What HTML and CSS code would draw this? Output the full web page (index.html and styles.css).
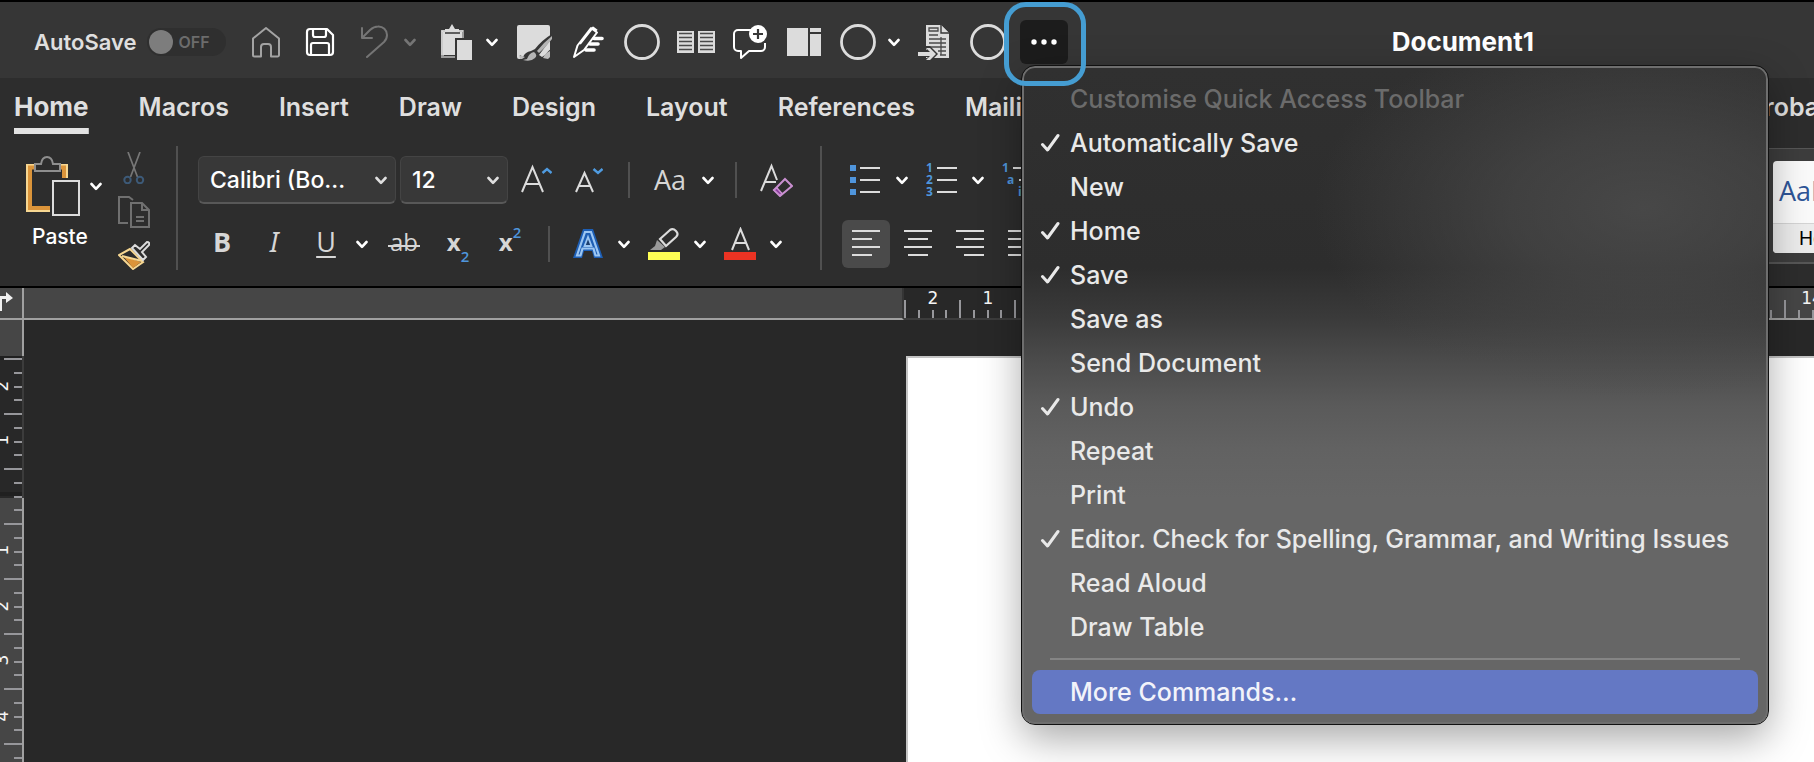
FILE: index.html
```html
<!DOCTYPE html>
<html lang="en-GB">
<head>
<meta charset="utf-8">
<title>Document1</title>
<link rel="stylesheet" href="styles.css">
</head>
<body>
<svg class="defs" aria-hidden="true">
  <symbol id="chev" viewBox="0 0 12 9"><path d="M1.5 2 6 6.8 10.500 2" fill="none" stroke="currentColor" stroke-width="2.600" stroke-linecap="round" stroke-linejoin="round"/></symbol>
  <symbol id="check" viewBox="0 0 20 20"><path d="M2.500 11.500 7.500 17 18 2.500" fill="none" stroke="currentColor" stroke-width="3" stroke-linecap="round" stroke-linejoin="round"/></symbol>
  <symbol id="ring" viewBox="0 0 36 36"><circle cx="18" cy="18" r="16.500" fill="none" stroke="#dcdcdc" stroke-width="2.800"/></symbol>
</svg>
<div class="app">
  <header class="titlebar">
    <div class="autosave">
      <label for="autosave">AutoSave</label>
      <span class="toggle"><input id="autosave" type="checkbox" role="switch"><span class="off">OFF</span></span>
    </div>
    <nav class="quick" aria-label="Quick Access Toolbar">
      <button class="tool" aria-label="Home"><svg width="30" height="32" viewBox="0 0 30 32" fill="none" stroke="#a3a3a3" stroke-width="2" stroke-linejoin="round"><path d="M2 12.500 15 2 28 12.500V29a1.500 1.500 0 0 1-1.500 1.500H20V21q0-3-3-3h-4q-3 0-3 3v9.500H3.500A1.500 1.500 0 0 1 2 29Z"/></svg></button>
      <button class="tool" aria-label="Save"><svg width="30" height="30" viewBox="0 0 30 30" fill="none" stroke="#fff" stroke-width="2.200" stroke-linejoin="round"><path d="M5 2h17l6 6v17a3 3 0 0 1-3 3H5a3 3 0 0 1-3-3V5a3 3 0 0 1 3-3Z"/><path d="M8 2v6q0 2 2 2h9q2 0 2-2V2M6 28V18q0-2 2-2h14q2 0 2 2v10"/></svg></button>
      <button class="tool" aria-label="Undo"><svg width="28" height="34" viewBox="0 0 28 34" fill="none" stroke="#757575" stroke-width="2" stroke-linecap="round" stroke-linejoin="round"><path d="M2 3v10h10M2.500 12.500 10 5Q14 1.500 18 1.500A8.500 8.500 0 0 1 27 10q0 4-3 7L7 32"/></svg></button>
      <button class="drop drop-wide dim" aria-label="Undo options"><svg width="12" height="9"><use href="#chev"/></svg></button>
      <button class="tool" aria-label="Paste"><svg width="32" height="36" viewBox="0 0 32 36"><path d="M1 6h23v9h-3V9H4v23h11v2H1Z" fill="#9a9a9a"/><path d="M3 8h19v6h-7v17H3Z" fill="#dcdcdc"/><path d="M2 31V7h21" fill="none" stroke="#dcdcdc" stroke-width="1.500"/><path d="M5 8V5h4l3-5 3 5h4v3Z" fill="#dcdcdc"/><path d="M5 9h15" stroke="#363636" stroke-width="1.500"/><path d="M15 14h18v22H15Z" fill="#363636"/><path d="M17 16h15v20H17Z" fill="#dcdcdc"/></svg></button>
      <button class="drop drop-mid" aria-label="Paste options"><svg width="12" height="9"><use href="#chev"/></svg></button>
      <button class="tool" aria-label="Format painter"><svg width="36" height="38" viewBox="0 0 36 38"><rect x="1" y="2" width="33" height="34" rx="2" fill="#dcdcdc"/><path d="M36 11Q26 17 19 26l-4 2q-6 1-8 6l-3-2v6h32V25q-4 3-7 7l-3 2-3-2Q29 24 36 15Z" fill="#363636"/><path d="M36 13Q27 20 21 28l2 2Q30 24 36 16ZM18 29q-5 1-7 7l-4 1q8 2 12-2 3-3-1-6Z" fill="#b4b4b4"/><path d="M27 35q2-5 7-7v6l-2 2ZM3 32l6 2-3 2H4Z" fill="#bcbcbc"/></svg></button>
      <button class="tool" aria-label="Editor"><svg width="32" height="34" viewBox="0 0 32 34" fill="none" stroke="#fff" stroke-width="2" stroke-linejoin="round"><path d="M2 32 5.500 20.500 19 3l6 4.500L12 25 2 32ZM8 19 21 2.500l4 3"/><g stroke-width="3.600" stroke-linecap="round"><path d="M22 13.500h8M18 19h8M14 25h8" /></g></svg></button>
      <button class="tool" aria-label="Command"><svg width="36" height="36"><use href="#ring"/></svg></button>
      <button class="tool" aria-label="Read mode"><svg width="38" height="24" viewBox="0 0 38 24"><path d="M0 1h17v22H0ZM21 1h17v22H21Z" fill="#dcdcdc"/><path d="M2 3.500h13M2 7.500h13M2 11.500h13M2 15.500h13M2 19.500h13M23 3.500h13M23 7.500h13M23 11.500h13M23 15.500h13M23 19.500h13" stroke="#4a4a4a" stroke-width="1.300"/></svg></button>
      <button class="tool" aria-label="New comment"><svg width="36" height="38" viewBox="0 0 36 38"><path d="M19 7H6a4 4 0 0 0-4 4v13a4 4 0 0 0 4 4h3v7l8-7h12a4 4 0 0 0 4-4v-4" fill="none" stroke="#fff" stroke-width="2" stroke-linejoin="round"/><circle cx="26" cy="11" r="9" fill="#fff"/><path d="M26 6v10M21 11h10" stroke="#363636" stroke-width="2.200"/></svg></button>
      <button class="tool" aria-label="Side pane"><svg width="34" height="30" viewBox="0 0 34 30" fill="#dcdcdc"><path d="M0 1h21v28H0ZM23 1h11v4H23ZM23 7h11v22H23Z"/></svg></button>
      <button class="tool" aria-label="Command"><svg width="36" height="36"><use href="#ring"/></svg></button>
      <button class="drop" aria-label="Command options"><svg width="12" height="9"><use href="#chev"/></svg></button>
      <button class="tool" aria-label="Insert from file"><svg width="32" height="38" viewBox="0 0 32 38"><path d="M8 2h15l8 8v25H8Z" fill="#dcdcdc"/><path d="M23 2v8h8" fill="#dcdcdc" stroke="#363636" stroke-width="1.400"/><path d="M11 5h9v3h-9ZM11 12h9M11 16h17M11 20h17M11 24h17M20 28h8M22 32h6M23 14v18" fill="none" stroke="#4a4a4a" stroke-width="1.300"/><path d="M0 27h9l-3-4h6l8 8-7 7H6l4-4H0Z" fill="#363636"/><path d="M0 29h12l-4-4h4l6 6-6 6H8l4-4H0Z" fill="#dcdcdc"/></svg></button>
      <button class="tool" aria-label="Command"><svg width="36" height="36"><use href="#ring"/></svg></button>
      <div class="more-wrap">
        <button class="more" aria-label="Customise Quick Access Toolbar" aria-expanded="true"><svg width="26" height="6" fill="#fff"><circle cx="3" cy="3" r="2.700"/><circle cx="13" cy="3" r="2.700"/><circle cx="23" cy="3" r="2.700"/></svg></button>
        <span class="focus-ring"></span>
        <div class="menu" role="menu">
          <div class="menu-title">Customise Quick Access Toolbar</div>
          <button class="item" role="menuitemcheckbox" aria-checked="true"><svg width="20" height="20"><use href="#check"/></svg>Automatically Save</button>
          <button class="item" role="menuitemcheckbox">New</button>
          <button class="item" role="menuitemcheckbox" aria-checked="true"><svg width="20" height="20"><use href="#check"/></svg>Home</button>
          <button class="item" role="menuitemcheckbox" aria-checked="true"><svg width="20" height="20"><use href="#check"/></svg>Save</button>
          <button class="item" role="menuitemcheckbox">Save as</button>
          <button class="item" role="menuitemcheckbox">Send Document</button>
          <button class="item" role="menuitemcheckbox" aria-checked="true"><svg width="20" height="20"><use href="#check"/></svg>Undo</button>
          <button class="item" role="menuitemcheckbox">Repeat</button>
          <button class="item" role="menuitemcheckbox">Print</button>
          <button class="item" role="menuitemcheckbox" aria-checked="true"><svg width="20" height="20"><use href="#check"/></svg>Editor. Check for Spelling, Grammar, and Writing Issues</button>
          <button class="item" role="menuitemcheckbox">Read Aloud</button>
          <button class="item" role="menuitemcheckbox">Draw Table</button>
          <hr>
          <button class="item selected" role="menuitem">More Commands…</button>
        </div>
      </div>
    </nav>
    <h1>Document1</h1>
  </header>

  <nav class="tabs" aria-label="Ribbon">
    <button class="tab active">Home</button>
    <button class="tab">Macros</button>
    <button class="tab">Insert</button>
    <button class="tab">Draw</button>
    <button class="tab">Design</button>
    <button class="tab">Layout</button>
    <button class="tab">References</button>
    <button class="tab">Mailings</button>
    <button class="tab last">Acrobat</button>
  </nav>

  <section class="ribbon">
    <div class="group clipboard">
      <div class="paste">
        <div class="paste-row">
          <button class="plain" aria-label="Paste"><svg width="54" height="60" viewBox="0 0 54 60" fill="none"><path d="M41 22V9H1v46h24" stroke="#f7d791" stroke-width="2"/><path d="M38 22V11.500H4V52h20" stroke="#db943a" stroke-width="4"/><path d="M9 8h6Q16 1 21 1t6 7h7v7H9Z" fill="#2d2d2d" stroke="#8e8e8e" stroke-width="2"/><path d="M24 22h31v38H24Z" fill="#2d2d2d"/><path d="M27 25h26v34H27Z" stroke="#dcdcdc" stroke-width="2"/></svg></button>
          <button class="plain" aria-label="Paste options"><svg width="12" height="9"><use href="#chev"/></svg></button>
        </div>
        <span class="paste-label">Paste</span>
      </div>
      <div class="clip-tools">
        <button class="plain" aria-label="Cut"><svg width="22" height="32" viewBox="0 0 22 32" fill="none"><path d="M5 0 14.500 25M17 0 7.500 25" stroke="#777" stroke-width="1.700"/><circle cx="4.500" cy="28" r="3.200" stroke="#3d5a78" stroke-width="2"/><circle cx="17" cy="28" r="3.200" stroke="#3d5a78" stroke-width="2"/></svg></button>
        <button class="plain" aria-label="Copy"><svg width="32" height="32" viewBox="0 0 32 32" fill="none" stroke="#707070" stroke-width="2"><path d="M10 27H1V1h10l4 3M13 7h11l7 7v17H13ZM24 7v7h7M18 21h8M18 25h8"/></svg></button>
        <button class="plain" aria-label="Format painter"><svg width="32" height="30" viewBox="0 0 32 30" fill="none" stroke-width="2"><path d="M12 9 1 15q7 7 14 14l10-7Z" fill="#2d2d2d" stroke="#f7d791"/><path d="m5 16 18 6-8 6Z" fill="#db943a"/><path d="m4 16 20 5" stroke="#f7d791"/><path d="m14 8 3-3 5 4 7-7q3 0 2 3l-7 7 4 5-3 3Z" fill="#2d2d2d" stroke="#dcdcdc"/></svg></button>
      </div>
    </div>

    <div class="group font">
      <div class="row row-spaced">
        <div class="combo combo-font"><select aria-label="Font"><option>Calibri (Bo…</option></select><svg width="12" height="9"><use href="#chev"/></svg></div>
        <div class="combo combo-size"><select aria-label="Font size"><option>12</option></select><svg width="12" height="9"><use href="#chev"/></svg></div>
        <button class="cmd" aria-label="Increase font size"><svg width="32" height="32" viewBox="0 0 32 32" fill="none"><path d="M2 28 12.500 3 23 28M6 20h13" stroke="#dcdcdc" stroke-width="2"/><path d="m22.500 9 4.500-4 4.500 4" stroke="#4f9be0" stroke-width="2.400"/></svg></button>
        <button class="cmd" aria-label="Decrease font size"><svg width="28" height="32" viewBox="0 0 28 32" fill="none"><path d="M1 28 9.500 9 18 28M4 22h11" stroke="#dcdcdc" stroke-width="2"/><path d="m18.500 5 4.500 4 4.500-4" stroke="#4f9be0" stroke-width="2.400"/></svg></button>
        <span class="rule"></span>
        <button class="cmd glyph case" aria-label="Change case">Aa</button>
        <button class="drop" aria-label="Case options"><svg width="12" height="9"><use href="#chev"/></svg></button>
        <span class="rule"></span>
        <button class="cmd" aria-label="Clear formatting"><svg width="34" height="34" viewBox="0 0 34 34" fill="none"><path d="M2 28 12.500 3 18 17M6 19h11" stroke="#dcdcdc" stroke-width="2"/><path d="M26 16 33 23 21 33 15 27Z" fill="#2d2d2d" stroke="#c98fd0" stroke-width="2"/><path d="m18 25 5 5.500-2 2-6-5.500Z" fill="#8e3fa0" stroke="#c98fd0" stroke-width="1.500"/></svg></button>
      </div>
      <div class="row">
        <button class="cmd glyph bold" aria-label="Bold">B</button>
        <button class="cmd glyph italic" aria-label="Italic">I</button>
        <button class="cmd glyph underline" aria-label="Underline">U</button>
        <button class="drop" aria-label="Underline options"><svg width="12" height="9"><use href="#chev"/></svg></button>
        <button class="cmd glyph strike" aria-label="Strikethrough">ab</button>
        <button class="cmd glyph script" aria-label="Subscript">x<sub>2</sub></button>
        <button class="cmd glyph script" aria-label="Superscript">x<sup>2</sup></button>
        <span class="rule"></span>
        <button class="cmd" aria-label="Text effects"><svg width="32" height="32" viewBox="0 0 32 32" stroke-linejoin="miter"><path d="M11 1h10l10 29h-9l-2-7h-8l-2 7H1Z" fill="#1d5eb4"/><path d="M13 4h6l8 23.500h-3.500l-2-7h-11l-2 7H5Z" fill="none" stroke="#9cc6f2" stroke-width="2.200"/><path d="M16 9 12.500 18h7Z" fill="#1d3f6e" stroke="#9cc6f2" stroke-width="1.800"/></svg></button>
        <button class="drop" aria-label="Text effect options"><svg width="12" height="9"><use href="#chev"/></svg></button>
        <button class="cmd" aria-label="Highlight"><svg width="32" height="34" viewBox="0 0 32 34"><path d="M0 25h32v8H0Z" fill="#ffff54"/><path d="m12 12 10-9q3-2 6 1t0 6L18 19Z" fill="none" stroke="#dcdcdc" stroke-width="2.200"/><path d="m9 13 8 7-4 3H2l5-4Z" fill="#9a9a9a"/></svg></button>
        <button class="drop" aria-label="Highlight options"><svg width="12" height="9"><use href="#chev"/></svg></button>
        <button class="cmd" aria-label="Font colour"><svg width="32" height="34" viewBox="0 0 32 34"><path d="M0 25h32v8H0Z" fill="#ea3323"/><path d="M8 23 16.500 2 25 23M11 16h11" fill="none" stroke="#dcdcdc" stroke-width="2"/></svg></button>
        <button class="drop" aria-label="Colour options"><svg width="12" height="9"><use href="#chev"/></svg></button>
      </div>
    </div>

    <div class="group paragraph">
      <div class="row">
        <button class="cmd" aria-label="Bullets"><svg width="32" height="32" viewBox="0 0 32 32"><path d="M0 1h6v6H0ZM0 13h6v6H0ZM0 25h6v6H0Z" fill="#4f95dc"/><path d="M10 4h20M10 16h20M10 28h20" stroke="#dcdcdc" stroke-width="2"/></svg></button>
        <button class="drop" aria-label="Bullet options"><svg width="12" height="9"><use href="#chev"/></svg></button>
        <button class="cmd" aria-label="Numbering"><svg class="digits" width="32" height="34" viewBox="0 0 32 34"><text x="0" y="9">1</text><text x="0" y="21">2</text><text x="0" y="33">3</text><path d="M11 5h20M11 17h20M11 29h20" stroke="#dcdcdc" stroke-width="2"/></svg></button>
        <button class="drop" aria-label="Numbering options"><svg width="12" height="9"><use href="#chev"/></svg></button>
        <button class="cmd" aria-label="Multilevel list"><svg class="digits" width="32" height="34" viewBox="0 0 32 34"><text x="0" y="9">1</text><text x="5" y="21">a</text><text x="16" y="33">i</text><path d="M11 5h20M17 17h14M22 29h9" stroke="#dcdcdc" stroke-width="2"/></svg></button>
      </div>
      <div class="row">
        <button class="cmd align on" aria-label="Align left"><svg width="28" height="28" stroke="#dcdcdc" stroke-width="2"><path d="M0 1h28M0 9h20M0 17h28M0 25h20"/></svg></button>
        <button class="cmd align" aria-label="Centre"><svg width="28" height="28" stroke="#dcdcdc" stroke-width="2"><path d="M0 1h28M4 9h20M0 17h28M4 25h20"/></svg></button>
        <button class="cmd align" aria-label="Align right"><svg width="28" height="28" stroke="#dcdcdc" stroke-width="2"><path d="M0 1h28M8 9h20M0 17h28M8 25h20"/></svg></button>
        <button class="cmd align" aria-label="Justify"><svg width="28" height="28" stroke="#dcdcdc" stroke-width="2"><path d="M0 1h28M0 9h28M0 17h28M0 25h28"/></svg></button>
      </div>
    </div>

    <div class="gallery">
      <button class="style-card"><span class="sample">AaBbCc</span><span class="style-name">Heading 1</span></button>
    </div>
  </section>

  <main class="work">
    <div class="corner"><svg width="14" height="24" viewBox="0 0 14 24"><path d="M0 5h6V1l7 6-7 5V8H2v12H0Z" fill="#f0f0f0"/></svg></div>
    <div class="hruler">
      <div class="outside"></div>
      <svg class="scale" height="32" width="100%">
        <defs><pattern id="hticks" x="-1" width="55" height="30" patternUnits="userSpaceOnUse"><path d="M2 12v18M16 22v8M30 22v8M43 22v8" stroke="#97979b" stroke-width="2"/></pattern></defs>
        <rect width="100%" height="30" fill="#282828"/>
        <rect x="138" width="100%" height="30" fill="#464646"/>
        <rect width="100%" height="30" fill="url(#hticks)"/>
        <rect y="30" width="100%" height="2" fill="#3c3c3c"/>
        <rect x="138" y="30" width="100%" height="2" fill="#a0a0a0"/>
        <text x="29" y="16">2</text><text x="84" y="16">1</text><text x="908" y="16">14</text>
      </svg>
    </div>
    <svg class="vruler" width="24" height="100%">
      <defs><pattern id="vticks" y="37" width="24" height="55" patternUnits="userSpaceOnUse"><path d="M4 2h18M14 16h8M14 30h8M14 43h8" stroke="#97979b" stroke-width="2"/></pattern></defs>
      <rect width="24" height="100%" fill="#464646"/>
      <rect x="22" width="2" height="100%" fill="#a0a0a0"/>
      <rect y="36" width="24" height="142" fill="#282828"/>
      <rect y="36" width="22" height="4" fill="#202020"/><rect y="172" width="22" height="4" fill="#202020"/>
      <rect x="22" y="36" width="2" height="142" fill="#3c3c3c"/>
      <rect y="37" width="24" height="100%" fill="url(#vticks)"/>
      <g class="vnums">
        <text transform="translate(8 66) rotate(-90)">2</text><text transform="translate(8 120) rotate(-90)">1</text>
        <text transform="translate(8 230) rotate(-90)">1</text><text transform="translate(8 286) rotate(-90)">2</text>
        <text transform="translate(8 340) rotate(-90)">3</text><text transform="translate(8 396) rotate(-90)">4</text>
      </g>
    </svg>
    <div class="canvas"><article class="page"></article></div>
  </main>
</div>
</body>
</html>
```
FILE: styles.css
```css
:root {
  --page-left: 880px;
  --bar: #363636;
  --ribbon: #2d2d2d;
  --ink: #dfdfdf;
}
* { box-sizing: border-box; }
body {
  margin: 0;
  background: #282828;
  color: var(--ink);
  font-family: Inter, "Liberation Sans", sans-serif;
}
.defs { display: none; }
button {
  margin: 0;
  padding: 0;
  border: 0;
  background: none;
  color: inherit;
  font: inherit;
}
svg { display: block; overflow: hidden; }
.app {
  display: flex;
  flex-direction: column;
  height: 100vh;
  overflow: hidden;
}

/* Title bar */
.titlebar {
  display: flex;
  align-items: center;
  height: 78px;
  flex: none;
  padding: 4px 280px 0 34px;
  border-top: 2px solid #000;
  background: var(--bar);
}
.autosave {
  display: flex;
  align-items: center;
  gap: 10px;
  width: 205px;
  font-size: 22px;
  font-weight: 600;
  line-height: 28px;
}
.toggle {
  display: flex;
  align-items: center;
  gap: 6px;
  width: 79px;
  height: 28px;
  padding: 2px;
  border-radius: 14px;
  background: #2f2f2f;
}
.toggle input {
  appearance: none;
  width: 24px;
  height: 24px;
  margin: 0;
  border-radius: 50%;
  background: #7d7d7d;
}
.off { color: #6c6c6c; font-size: 16px; }
.quick { display: flex; align-items: center; color: #fff; }
.tool, .drop, .cmd {
  display: flex;
  align-items: center;
  justify-content: center;
  flex: none;
}
.tool { width: 54px; height: 44px; }
.drop {
  justify-content: flex-start;
  width: 22px;
  height: 44px;
  padding-left: 3px;
  color: #fff;
}
.drop-mid { width: 24px; }
.drop-wide { width: 28px; }
.dim { color: #757575; }
.more-wrap { position: relative; margin-left: 5px; }
.more {
  display: flex;
  align-items: center;
  justify-content: center;
  width: 48px;
  height: 44px;
  border-radius: 6px;
  background: #1c1c1c;
}
.focus-ring {
  position: absolute;
  z-index: 3;
  inset: -18px -18px -22px -16px;
  border: 5px solid #459dd2;
  border-radius: 22px;
}
h1 {
  margin: 0 0 0 auto;
  color: #fff;
  font-size: 26px;
  font-weight: 700;
  line-height: 32px;
}

/* Quick access menu */
.menu {
  position: absolute;
  z-index: 2;
  top: 46px;
  left: 2px;
  width: 746px;
  padding: 9px 8px 8px;
  border: 2px solid #6e6e6e;
  border-radius: 13px;
  outline: 1px solid #111;
  background:
    radial-gradient(ellipse 330px 190px at 620px 140px, rgba(80, 80, 80, .75), rgba(76, 76, 76, .6) 40%, rgba(70, 70, 70, 0)),
    linear-gradient(#303030, #2d2d2d 200px, #3a3a3a 249px, #4a4a4a 290px, #5a5a5a 337px, #626262 381px, #666 430px);
  box-shadow: 0 14px 40px rgba(0, 0, 0, .35);
  color: #e9e9e9;
  font-size: 25px;
  font-weight: 500;
  line-height: 44px;
}
.menu-title { padding-left: 38px; color: #6b6b6b; }
.item {
  position: relative;
  display: block;
  width: 100%;
  padding-left: 38px;
  border-radius: 8px;
  text-align: left;
  white-space: nowrap;
}
.item svg { position: absolute; left: 8px; top: 12px; }
.item.selected { background: #6478c4; color: #f2f3fa; }
.menu hr {
  height: 2px;
  margin: 9px 18px 10px;
  border: 0;
  background: #858585;
}

/* Tabs */
.tabs {
  display: flex;
  align-items: flex-start;
  gap: 50px;
  flex: none;
  height: 68px;
  padding: 14px 0 0 14px;
  background: var(--ribbon);
  font-size: 25px;
  font-weight: 600;
  line-height: 30px;
}
.tab { flex: none; padding-bottom: 6px; border-bottom: 6px solid transparent; }
.tab.active {
  font-size: 26px;
  font-weight: 700;
  background: linear-gradient(#e2e2e2, #e2e2e2) bottom / 100% 6px no-repeat border-box;
}
.tab.last { margin: 0 -14px 0 auto; }

/* Ribbon */
.ribbon {
  display: flex;
  flex: none;
  height: 142px;
  padding-bottom: 16px;
  border-bottom: 2px solid #000;
  background: var(--ribbon);
}
.group { display: flex; flex: none; border-right: 2px solid #505050; }
.clipboard { width: 178px; padding-left: 26px; gap: 16px; }
.paste { padding-top: 10px; }
.paste-row { display: flex; align-items: center; gap: 10px; color: #fff; }
.paste-label {
  display: block;
  padding: 9px 0 0 6px;
  color: #fff;
  font-size: 21px;
  font-weight: 500;
  line-height: 24px;
}
.clip-tools {
  display: flex;
  flex-direction: column;
  align-items: center;
  gap: 12px;
  padding-top: 6px;
}
.font, .paragraph { flex-direction: column; gap: 16px; padding-top: 10px; }
.font { width: 644px; padding-left: 18px; }
.paragraph { padding-left: 18px; border-right: 0; }
.row { display: flex; align-items: center; height: 48px; }
.row-spaced { gap: 1px; }
.row .drop { width: 24px; padding-left: 4px; }
.cmd { width: 52px; height: 48px; }
.combo {
  position: relative;
  display: flex;
  flex: none;
  margin: 0 1px 0 2px;
}
.combo-font { width: 198px; }
.combo-size { width: 108px; }
.combo select {
  appearance: none;
  width: 100%;
  height: 48px;
  padding: 0 11px;
  border: 1px solid #444;
  border-bottom: 2px solid #585858;
  border-radius: 6px;
  background: #383838;
  color: #fff;
  font: 500 23px/44px Inter, sans-serif;
}
.combo svg { position: absolute; right: 9px; top: 20px; }
.rule {
  flex: none;
  width: 2px;
  height: 36px;
  margin: 0 12px;
  background: #505050;
}
.glyph { padding-bottom: 4px; color: #d6d6d6; line-height: 32px; }
.case { width: 54px; padding-bottom: 0; font: 400 27px/32px "Open Sans", sans-serif; }
.bold { font: 700 27px/32px "Open Sans", sans-serif; }
.italic { font: italic 400 27px/32px "Noto Sans", sans-serif; }
.underline { font: 400 27px/32px "Open Sans", sans-serif; text-decoration: underline 2px; text-underline-offset: 4px; }
.strike {
  width: 56px;
  font: 400 24px/32px "Open Sans", sans-serif;
  background: linear-gradient(#d6d6d6, #d6d6d6) center 25px / 32px 2px no-repeat;
}
.script { font: 700 24px/32px "Open Sans", sans-serif; }
.script sub, .script sup { color: #4f95dc; font-size: 15px; font-weight: 600; line-height: 16px; }
.script sub { align-self: flex-end; }
.script sup { align-self: flex-start; padding-top: 4px; }
.digits text { fill: #4f95dc; font: 700 12px "Open Sans", sans-serif; }
.align { width: 48px; margin: 0 2px; border-radius: 6px; }
.align.on { background: #4a4a4a; }
.gallery {
  flex: none;
  width: 50px;
  margin: 2px 0 6px auto;
  padding: 12px 0 9px 9px;
  overflow: hidden;
  border: solid #575757;
  border-width: 1px 0 2px;
  background: #3d3d3d;
}
.style-card {
  display: flex;
  flex-direction: column;
  width: 142px;
  height: 92px;
  overflow: hidden;
  border-radius: 4px;
  background: #fafafa;
  text-align: left;
}
.sample {
  flex: 1;
  width: 100%;
  padding-left: 6px;
  color: #2f5597;
  font: 400 27px/60px "Open Sans", sans-serif;
}
.style-name {
  width: 100%;
  padding-left: 26px;
  border-top: 1px solid #d4d4d4;
  background: #ececec;
  color: #000;
  font-size: 19px;
  line-height: 29px;
}

/* Rulers and document */
.work {
  display: grid;
  grid-template-columns: 24px 1fr;
  grid-template-rows: 32px 1fr;
  flex: 1;
  min-height: 0;
}
.corner {
  padding-top: 3px;
  border: solid #a0a0a0;
  border-width: 0 2px 2px 0;
  background: #464646;
}
.hruler { display: flex; min-width: 0; }
.outside {
  flex: none;
  width: var(--page-left);
  border-right: 2px solid #353535;
  border-bottom: 2px solid #a0a0a0;
  background: #464646;
}
.scale { flex: 1; min-width: 0; }
.scale text, .vnums text {
  fill: #f4f4f4;
  font: 17px "DejaVu Sans", sans-serif;
  text-anchor: middle;
}
.vruler { min-height: 0; }
.canvas {
  display: flex;
  padding: 36px 0 0 calc(var(--page-left) + 2px);
  background: #282828;
}
.page {
  flex: 1;
  border: solid #c4c4c4;
  border-width: 2px 0 0 2px;
  background: #fff;
}
```
